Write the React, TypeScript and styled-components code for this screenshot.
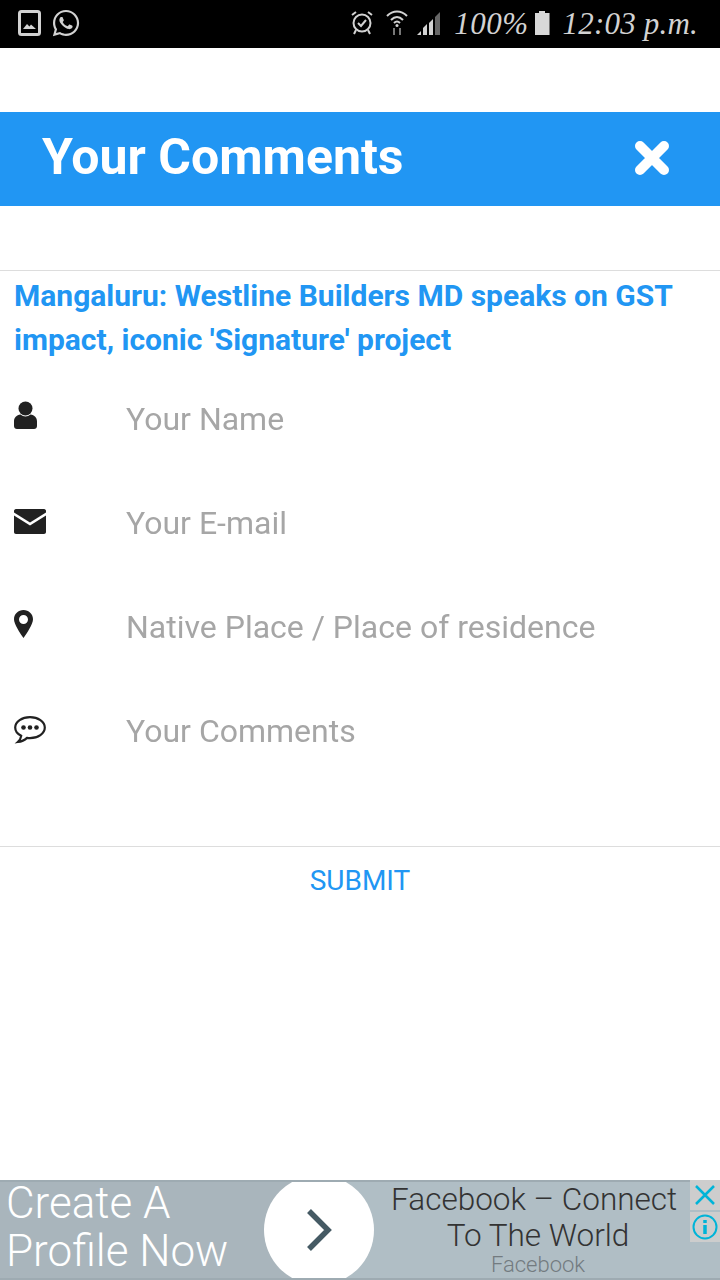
import React from "react";
import styled, { createGlobalStyle } from "styled-components";
import { FaWhatsapp } from "react-icons/fa";

const GlobalStyle = createGlobalStyle`
  html, body {
    margin: 0;
    padding: 0;
    background: #fff;
    font-family: Roboto, "Liberation Sans", sans-serif;
  }
  * {
    box-sizing: border-box;
  }
`;

const Page = styled.div`
  width: 720px;
  height: 1280px;
  display: flex;
  flex-direction: column;
  overflow: hidden;
`;

const StatusBar = styled.div`
  height: 48px;
  flex: none;
  background: #000;
  color: #d2d2d2;
  display: flex;
  align-items: center;
  padding: 0 22px 2px 18px;
`;

const StatusLeft = styled.div`
  display: flex;
  align-items: center;
  gap: 10px;
`;

const StatusRight = styled.div`
  margin-left: auto;
  display: flex;
  align-items: center;
`;

const StatusIcon = styled.span`
  display: flex;
  margin-right: ${(p) => p.$gap}px;
`;

const Battery = styled.span`
  width: 15px;
  height: 24px;
  margin: 0 13px 0 6px;
  background: #d8d8d8;
  clip-path: polygon(0 8%, 30% 8%, 30% 0, 70% 0, 70% 8%, 100% 8%, 100% 100%, 0 100%);
`;

const StatusText = styled.span`
  font-family: "Liberation Serif", serif;
  font-style: italic;
  font-size: 31px;
  letter-spacing: ${(p) => p.$spacing}px;
  line-height: 1;
  white-space: nowrap;
`;

const Header = styled.header`
  margin-top: 64px;
  height: 94px;
  flex: none;
  background: #2196f3;
  color: #fff;
  display: flex;
  align-items: center;
  justify-content: space-between;
  padding: 0 50px 2px 42px;
`;

const HeaderTitle = styled.h1`
  margin: 0 0 2px;
  font-size: 50px;
  font-weight: 700;
  line-height: 1;
`;

const ArticleTitle = styled.h2`
  margin: 64px 0 0;
  padding: 3px 14px 0;
  border-top: 1px solid #ddd;
  color: #2196f3;
  font-size: 30px;
  font-weight: 700;
  line-height: 44px;
`;

const Form = styled.form`
  display: flex;
  flex-direction: column;
  padding-top: 27px;
`;

const Field = styled.label`
  height: 104px;
  display: flex;
  align-items: flex-start;
  padding: 0 14px;
  color: #212121;
`;

const FieldIcon = styled.span`
  width: 112px;
  flex: none;
  display: flex;
  padding-top: ${(p) => p.$top}px;
`;

const FieldInput = styled.input`
  flex: 1;
  min-width: 0;
  border: 0;
  outline: 0;
  padding: 0;
  height: 60px;
  background: transparent;
  font-family: Roboto, sans-serif;
  font-size: 32px;
  will-change: transform;
  &::placeholder {
    color: #a6a6a6;
    opacity: 1;
  }
`;

const SubmitRow = styled.div`
  margin-top: 41px;
  border-top: 1px solid #ddd;
  display: flex;
  justify-content: center;
`;

const SubmitButton = styled.button`
  border: 0;
  background: none;
  padding: 0;
  height: 66px;
  color: #2196f3;
  font-family: Roboto, sans-serif;
  font-size: 28px;
`;

const Ad = styled.aside`
  margin-top: auto;
  height: 100px;
  flex: none;
  display: flex;
  border-top: 2px solid #9eabb2;
  border-bottom: 2px solid #9eabb2;
  background: #b0bec5;
`;

const AdLeft = styled.div`
  width: 319px;
  flex: none;
  background: #a9b5bc;
  color: #fff;
  padding: 0 0 0 6px;
  font-size: 44px;
  font-weight: 300;
  line-height: 48px;
`;

const AdLeftText = styled.div`
  margin-top: -3px;
`;

const AdArrowClip = styled.div`
  width: 110px;
  height: 96px;
  flex: none;
  margin-left: -55px;
  overflow: hidden;
`;

const AdArrow = styled.div`
  width: 110px;
  height: 110px;
  margin-top: -7px;
  border-radius: 50%;
  background: #fff;
  display: flex;
  align-items: center;
  justify-content: center;
`;

const AdBody = styled.div`
  flex: 1;
  display: flex;
  flex-direction: column;
  align-items: center;
  padding-left: 12px;
  color: #333;
  font-size: 31.5px;
  font-weight: 300;
  line-height: 36px;
`;

const AdHeadline = styled.div`
  text-align: center;
  white-space: nowrap;
`;

const AdSource = styled.div`
  margin-top: -2px;
  color: #737b80;
  font-size: 22px;
  line-height: 25px;
`;

const AdControls = styled.div`
  width: 30px;
  flex: none;
  margin-top: -2px;
  display: flex;
  flex-direction: column;
  gap: 2px;
`;

const AdControl = styled.div`
  height: 30px;
  background: #cdcdcd;
  display: flex;
  align-items: center;
  justify-content: center;
`;

const GalleryIcon = () => (
  <svg width="23" height="26" viewBox="0 0 23 26">
    <rect x="1.500" y="1.500" width="20" height="23" rx="2" fill="none" stroke="#d2d2d2" strokeWidth="3" />
    <path d="M5 19l4-5 2.500 2.500L13 14.500 18 19z" fill="#d2d2d2" />
  </svg>
);

const AlarmIcon = () => (
  <svg width="22" height="28" viewBox="0 0 22 28" fill="none" stroke="#d2d2d2" strokeWidth="2">
    <circle cx="11" cy="14" r="8.500" />
    <path d="M7 14l3 3 5-6M1 6l4-3M21 6l-4-3M5 21l-2 4M17 21l2 4" />
  </svg>
);

const WifiIcon = () => (
  <svg width="22" height="28" viewBox="0 0 22 28" fill="none" stroke="#d2d2d2" strokeWidth="2">
    <path d="M1 7c6-6 14-6 20 0M5 11c4-4 8-4 12 0M8 14c2-2 4-2 6 0" />
    <circle cx="11" cy="16.500" r="1.500" fill="#d2d2d2" stroke="none" />
    <path d="M8 19v7M14 19v7" stroke="#777" />
  </svg>
);

const SignalIcon = () => (
  <svg width="23" height="24" viewBox="0 0 23 24">
    <path d="M0 24l4-4v4zM6 24v-7l4-4v11zM12 24V12l4-4v16z" fill="#d2d2d2" />
    <path d="M18 24V6l5-5v23z" fill="#666" />
  </svg>
);

const UserIcon = () => (
  <svg width="24" height="28" viewBox="0 0 24 28" fill="#212121">
    <circle cx="11.500" cy="7.500" r="7" />
    <path d="M6.500 13.500c3 2.500 7 2.500 10 0 4 .5 6.500 3 6.500 7V25c0 1.700-1.300 3-3 3H3c-1.700 0-3-1.300-3-3v-4.500c0-4 2.500-6.500 6.500-7z" />
  </svg>
);

const MailIcon = () => (
  <svg width="32" height="25" viewBox="0 0 32 25" fill="#212121">
    <path d="M2 0h28c1.300 0 2 1 2 2v1.500L16 13.500 0 3.500V2C0 1 .7 0 2 0z" />
    <path d="M0 6.500l16 10 16-10V23c0 1.200-.8 2-2 2H2c-1.200 0-2-.8-2-2z" />
  </svg>
);

const PinIcon = () => (
  <svg width="19" height="28" viewBox="0 0 19 28">
    <path
      fillRule="evenodd"
      fill="#212121"
      d="M9.500 0C4.300 0 0 4 0 9.200c0 4.800 6 13.800 9.500 18.800C13 23 19 14 19 9.200 19 4 14.700 0 9.500 0zm0 5a4.500 4.500 0 1 1 0 9 4.500 4.500 0 0 1 0-9z"
    />
  </svg>
);

const ChatIcon = () => (
  <svg width="32" height="28" viewBox="0 0 32 28">
    <path
      d="M16 1.200C8 1.200 1.200 5.600 1.200 11.500c0 3.600 2.500 6.600 6 8.300-.3 2.200-1.600 4.600-3.400 6.200 3.500-.3 6.800-1.700 9.200-4.100 1 .2 2 .3 3 .3 8 0 14.800-4.700 14.800-10.700S24 1.200 16 1.200z"
      fill="none"
      stroke="#212121"
      strokeWidth="2.200"
    />
    <circle cx="9.500" cy="11.500" r="2.300" fill="#212121" />
    <circle cx="16" cy="11.500" r="2.300" fill="#212121" />
    <circle cx="22.500" cy="11.500" r="2.300" fill="#212121" />
  </svg>
);

const App = () => {
  return (
    <>
      <GlobalStyle />
      <Page>
        <StatusBar>
          <StatusLeft>
            <GalleryIcon />
            <FaWhatsapp size={30} />
          </StatusLeft>
          <StatusRight>
            <StatusIcon $gap={13}><AlarmIcon /></StatusIcon>
            <StatusIcon $gap={9}><WifiIcon /></StatusIcon>
            <StatusIcon $gap={14}><SignalIcon /></StatusIcon>
            <StatusText $spacing={0.5}>100%</StatusText>
            <Battery />
            <StatusText $spacing={0.2}>12:03 p.m.</StatusText>
          </StatusRight>
        </StatusBar>

        <Header>
          <HeaderTitle>Your Comments</HeaderTitle>
          <svg width="36" height="36" viewBox="0 0 36 36">
            <path d="M6 6l24 24M30 6L6 30" stroke="#fff" strokeWidth="10" strokeLinecap="round" />
          </svg>
        </Header>

        <ArticleTitle>Mangaluru: Westline Builders MD speaks on GST impact, iconic 'Signature' project</ArticleTitle>

        <Form>
          <Field>
            <FieldIcon $top={12}><UserIcon /></FieldIcon>
            <FieldInput placeholder="Your Name" />
          </Field>
          <Field>
            <FieldIcon $top={16}><MailIcon /></FieldIcon>
            <FieldInput placeholder="Your E-mail" />
          </Field>
          <Field>
            <FieldIcon $top={13}><PinIcon /></FieldIcon>
            <FieldInput placeholder="Native Place / Place of residence" />
          </Field>
          <Field>
            <FieldIcon $top={15}><ChatIcon /></FieldIcon>
            <FieldInput placeholder="Your Comments" />
          </Field>
        </Form>

        <SubmitRow>
          <SubmitButton type="button">SUBMIT</SubmitButton>
        </SubmitRow>

        <Ad>
          <AdLeft><AdLeftText>Create A<br />Profile Now</AdLeftText></AdLeft>
          <AdArrowClip>
            <AdArrow>
              <svg width="28" height="44" viewBox="0 0 28 44">
                <path d="M4 3l19 19L4 41" fill="none" stroke="#455a64" strokeWidth="5.500" />
              </svg>
            </AdArrow>
          </AdArrowClip>
          <AdBody>
            <AdHeadline>Facebook – Connect&nbsp;<br />To The World</AdHeadline>
            <AdSource>Facebook</AdSource>
          </AdBody>
          <AdControls>
            <AdControl>
              <svg width="22" height="22" viewBox="0 0 22 22">
                <path d="M2 2l18 18M20 2L2 20" stroke="#00b4d8" strokeWidth="2.500" />
              </svg>
            </AdControl>
            <AdControl>
              <svg width="26" height="26" viewBox="0 0 26 26">
                <circle cx="13" cy="13" r="11.500" fill="none" stroke="#00b4d8" strokeWidth="2" />
                <path d="M13 11v9M13 6v3" stroke="#00b4d8" strokeWidth="3.500" />
              </svg>
            </AdControl>
          </AdControls>
        </Ad>
      </Page>
    </>
  );
};

export default App;
